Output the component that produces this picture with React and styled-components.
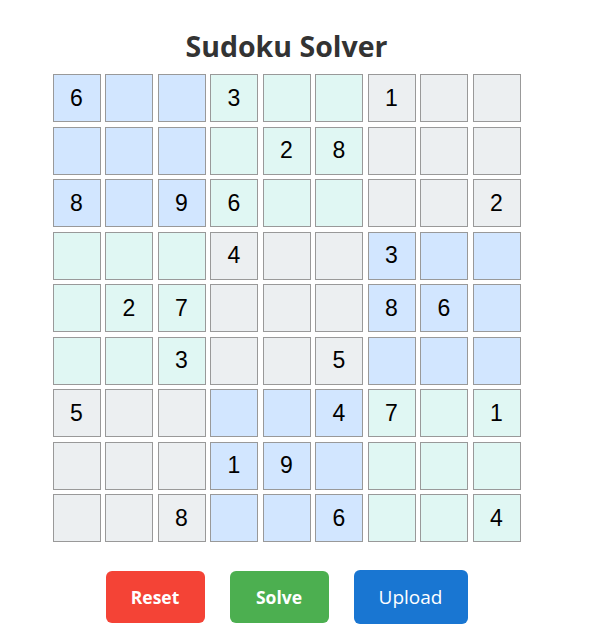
import React from 'react';
import styled, { createGlobalStyle } from 'styled-components';

const GlobalStyle = createGlobalStyle`
  body {
    margin: 0;
    background: #fff;
    font-family: "Open Sans", "Noto Sans", sans-serif;
  }
`;

const puzzle = [
  [6, 0, 0, 3, 0, 0, 1, 0, 0],
  [0, 0, 0, 0, 2, 8, 0, 0, 0],
  [8, 0, 9, 6, 0, 0, 0, 0, 2],
  [0, 0, 0, 4, 0, 0, 3, 0, 0],
  [0, 2, 7, 0, 0, 0, 8, 6, 0],
  [0, 0, 3, 0, 0, 5, 0, 0, 0],
  [5, 0, 0, 0, 0, 4, 7, 0, 1],
  [0, 0, 0, 1, 9, 0, 0, 0, 0],
  [0, 0, 8, 0, 0, 6, 0, 0, 4],
];

const boxColors = ['#d2e6ff', '#e0f7f3', '#eceff1'];

const App = () => {
  return (
    <>
      <GlobalStyle />
      <Page>
        <Title>Sudoku Solver</Title>
        <Board>
          {puzzle.map((row, r) =>
            row.map((v, c) => {
              const box = (Math.floor(r / 3) + Math.floor(c / 3)) % 3;
              return (
                <Cell key={`${r}-${c}`} $bg={boxColors[box]}>
                  {v || ''}
                </Cell>
              );
            })
          )}
        </Board>
        <Actions>
          <Button $color="#f44336">Reset</Button>
          <Button $color="#4caf50">Solve</Button>
          <UploadButton>Upload</UploadButton>
        </Actions>
      </Page>
    </>
  );
};

export default App;

const Page = styled.div`
  width: 573px;
  display: flex;
  flex-direction: column;
  align-items: center;
`;

const Title = styled.h1`
  margin: 27px 0 9px;
  font-family: "Open Sans", sans-serif;
  font-size: 28.5px;
  font-weight: 700;
  color: #333;
  line-height: 38px;
`;

const Board = styled.div`
  display: grid;
  grid-template-columns: repeat(9, 48px);
  grid-auto-rows: 48px;
  gap: 4.5px;
`;

const Cell = styled.div`
  box-sizing: border-box;
  border: 1px solid #999;
  background: ${({ $bg }) => $bg};
  display: flex;
  align-items: center;
  justify-content: center;
  font-family: "Liberation Sans", Arial, sans-serif;
  font-size: 23px;
  color: #000;
`;

const Actions = styled.div`
  display: flex;
  align-items: center;
  gap: 25px;
  margin-top: 28px;
`;

const Button = styled.button`
  width: 99px;
  height: 52px;
  border: none;
  border-radius: 6px;
  background: ${({ $color }) => $color};
  color: #fff;
  font-family: "Open Sans", sans-serif;
  font-size: 17.5px;
  font-weight: 700;
  cursor: pointer;
`;

const UploadButton = styled(Button)`
  width: 114px;
  height: 54px;
  background: #1976d2;
  font-size: 19px;
  font-weight: 400;
`;
